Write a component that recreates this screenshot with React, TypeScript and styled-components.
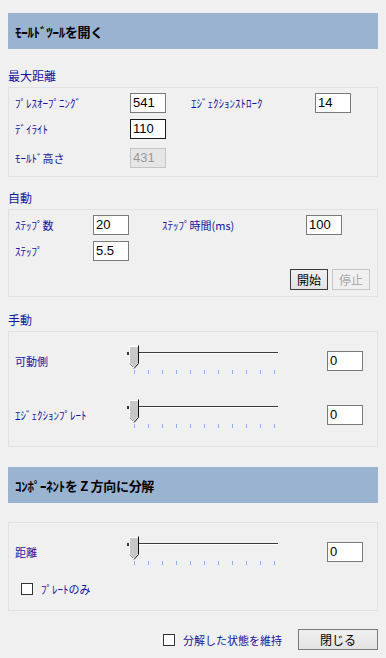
import React from "react";
import styled, { createGlobalStyle } from "styled-components";

const GlobalStyle = createGlobalStyle`
  html, body {
    margin: 0;
    padding: 0;
    background: #f0f0f0;
  }
  body {
    font-family: "Noto Sans CJK JP", "Liberation Sans", sans-serif;
    font-size: 12px;
    color: #000;
  }
`;

const Page = styled.div`
  width: 386px;
  height: 658px;
  box-sizing: border-box;
  padding: 13px 8px 0 8px;
  display: flex;
  flex-direction: column;
  background: #f0f0f0;
`;

const HeaderBar = styled.div<{ $mt?: number }>`
  height: 36px;
  margin-top: ${(p) => p.$mt ?? 0}px;
  background: #9ab3d1;
  display: flex;
  align-items: center;
  padding-left: 7px;
  font-weight: bold;
  font-size: 13px;
  letter-spacing: -0.3px;
`;

const GroupLabel = styled.div<{ $mt: number }>`
  margin-top: ${(p) => p.$mt}px;
  height: 16px;
  line-height: 16px;
  color: #1414a0;
  font-size: 12px;
  margin-bottom: 3px;
`;

const Panel = styled.div<{ $h: number; $mt?: number }>`
  height: ${(p) => p.$h}px;
  margin-top: ${(p) => p.$mt ?? 0}px;
  box-sizing: border-box;
  border: 1px solid #e2e2e2;
  padding: 5px 7px 0 6px;
  display: flex;
  flex-direction: column;
`;

const Row = styled.div<{ $mt?: number }>`
  display: flex;
  align-items: center;
  height: 20px;
  margin-top: ${(p) => p.$mt ?? 0}px;
`;

const Label = styled.span<{ $w: number; $ml?: number }>`
  width: ${(p) => p.$w}px;
  margin-left: ${(p) => p.$ml ?? 0}px;
  flex: none;
  color: #1414a0;
  font-size: 11px;
  white-space: nowrap;
`;

const Input = styled.div<{ $focus?: boolean; $disabled?: boolean; $ml?: number }>`
  width: 36px;
  height: 20px;
  box-sizing: border-box;
  flex: none;
  margin-left: ${(p) => p.$ml ?? 0}px;
  border: 1px solid
    ${(p) => (p.$disabled ? "#c4c4c4" : p.$focus ? "#1a1a1a" : "#7a7a7a")};
  background: ${(p) => (p.$disabled ? "#e6e6e6" : "#fff")};
  color: ${(p) => (p.$disabled ? "#9a9a9a" : "#000")};
  font-family: "Liberation Sans", Arial, sans-serif;
  font-size: 13px;
  line-height: 18px;
  padding-left: 2px;
`;

const ButtonRow = styled.div`
  display: flex;
  justify-content: flex-end;
  gap: 4px;
  margin-top: 8px;
`;

const Button = styled.div<{ $disabled?: boolean; $default?: boolean; $w: number }>`
  width: ${(p) => p.$w}px;
  height: 21px;
  box-sizing: border-box;
  border: 1px solid
    ${(p) => (p.$disabled ? "#c6c6c6" : p.$default ? "#3c3c3c" : "#7a7a7a")};
  background: ${(p) =>
    p.$disabled ? "#f0f0f0" : "linear-gradient(#f0f0f0, #e3e3e3)"};
  color: ${(p) => (p.$disabled ? "#a8a8a8" : "#000")};
  display: flex;
  align-items: center;
  justify-content: center;
  font-size: 12px;
`;

const SliderRow = styled.div<{ $mt: number }>`
  display: flex;
  align-items: center;
  height: 32px;
  margin-top: ${(p) => p.$mt}px;
`;

const SliderBox = styled.svg`
  flex: none;
  display: block;
`;

const CheckRow = styled.label<{ $mt?: number; $ml?: number }>`
  display: flex;
  align-items: center;
  gap: 8px;
  margin-top: ${(p) => p.$mt ?? 0}px;
  margin-left: ${(p) => p.$ml ?? 0}px;
  color: #1414a0;
  font-size: 11px;
`;

const CheckBox = styled.span`
  width: 12px;
  height: 12px;
  box-sizing: border-box;
  border: 1px solid #333;
  background: #fff;
  flex: none;
`;

const Footer = styled.div`
  display: flex;
  justify-content: flex-end;
  align-items: center;
  margin-top: 18px;
  gap: 16px;
`;

const Slider = () => {
  const ticks = Array.from({ length: 11 }, (_, i) => 8 + i * 14);
  return (
    <SliderBox width={156} height={32} viewBox="0 0 156 32">
      <rect x={1} y={7} width={2} height={3} fill="#333" />
      <line x1={1} y1={7.5} x2={152} y2={7.5} stroke="#3a3a3a" strokeWidth={1} />
      <line x1={12} y1={8.5} x2={152} y2={8.5} stroke="#ffffff" strokeWidth={1} />
      <path d="M3.5 1.5 H12.5 V18 L8 23 L3.5 18 Z" fill="#c8c8c8" stroke="#fff" />
      <path d="M12.5 0.5 V18.5 L8 23.5" fill="none" stroke="#111" />
      <path d="M3.5 18.5 L7 22" fill="none" stroke="#8a8a8a" />
      {ticks.map((x) => (
        <rect key={x} x={x} y={25} width={1} height={4} fill="#8aaee8" />
      ))}
    </SliderBox>
  );
};

export default function App() {
  return (
    <>
      <GlobalStyle />
      <Page>
        <HeaderBar>ﾓｰﾙﾄﾞﾂｰﾙを開く</HeaderBar>

        <GroupLabel $mt={19}>最大距離</GroupLabel>
        <Panel $h={90}>
          <Row>
            <Label $w={115}>ﾌﾟﾚｽｵｰﾌﾟﾆﾝｸﾞ</Label>
            <Input>541</Input>
            <Label $w={124} $ml={25}>ｴｼﾞｪｸｼｮﾝｽﾄﾛｰｸ</Label>
            <Input>14</Input>
          </Row>
          <Row $mt={6}>
            <Label $w={115}>ﾃﾞｲﾗｲﾄ</Label>
            <Input $focus>110</Input>
          </Row>
          <Row $mt={9}>
            <Label $w={115}>ﾓｰﾙﾄﾞ高さ</Label>
            <Input $disabled>431</Input>
          </Row>
        </Panel>

        <GroupLabel $mt={13}>自動</GroupLabel>
        <Panel $h={88}>
          <Row>
            <Label $w={78}>ｽﾃｯﾌﾟ数</Label>
            <Input>20</Input>
            <Label $w={144} $ml={33}>ｽﾃｯﾌﾟ時間(ms)</Label>
            <Input>100</Input>
          </Row>
          <Row $mt={6}>
            <Label $w={78}>ｽﾃｯﾌﾟ</Label>
            <Input>5.5</Input>
          </Row>
          <ButtonRow>
            <Button $default $w={38}>開始</Button>
            <Button $disabled $w={38}>停止</Button>
          </ButtonRow>
        </Panel>

        <GroupLabel $mt={15}>手動</GroupLabel>
        <Panel $h={116}>
          <SliderRow $mt={8}>
            <Label $w={111}>可動側</Label>
            <Slider />
            <Input $ml={45}>0</Input>
          </SliderRow>
          <SliderRow $mt={22}>
            <Label $w={111}>ｴｼﾞｪｸｼｮﾝﾌﾟﾚｰﾄ</Label>
            <Slider />
            <Input $ml={45}>0</Input>
          </SliderRow>
        </Panel>

        <HeaderBar $mt={20}>ｺﾝﾎﾟｰﾈﾝﾄを Z 方向に分解</HeaderBar>

        <Panel $h={89} $mt={19}>
          <SliderRow $mt={8}>
            <Label $w={111}>距離</Label>
            <Slider />
            <Input $ml={45}>0</Input>
          </SliderRow>
          <CheckRow $mt={13} $ml={6}>
            <CheckBox />
            ﾌﾟﾚｰﾄのみ
          </CheckRow>
        </Panel>

        <Footer>
          <CheckRow>
            <CheckBox />
            分解した状態を維持
          </CheckRow>
          <Button $w={80}>閉じる</Button>
        </Footer>
      </Page>
    </>
  );
}
